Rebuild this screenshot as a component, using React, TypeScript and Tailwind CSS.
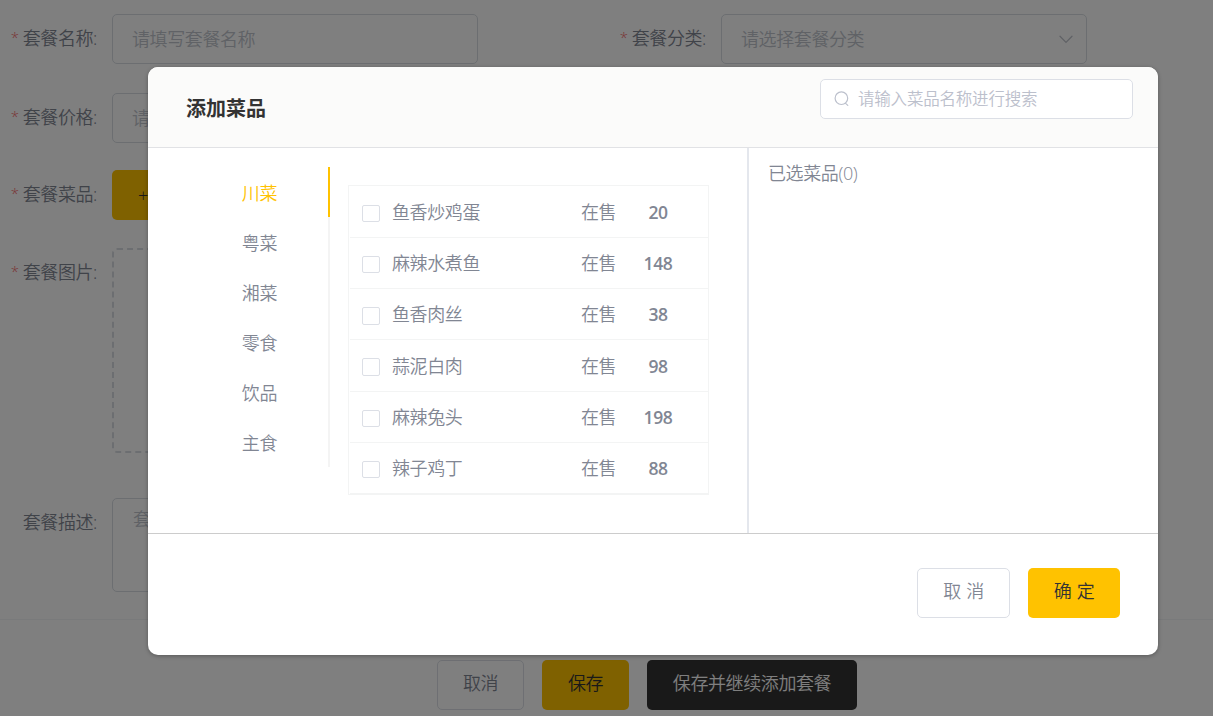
import React, { useState } from 'react';
import clsx from 'clsx';

interface Dish {
  id: number;
  name: string;
  status: string;
  price: number;
}

interface FormLabelProps {
  text: string;
  required?: boolean;
}

const CATEGORIES = ['川菜', '粤菜', '湘菜', '零食', '饮品', '主食'];

const DISHES: Dish[] = [
  { id: 1, name: '鱼香炒鸡蛋', status: '在售', price: 20 },
  { id: 2, name: '麻辣水煮鱼', status: '在售', price: 148 },
  { id: 3, name: '鱼香肉丝', status: '在售', price: 38 },
  { id: 4, name: '蒜泥白肉', status: '在售', price: 98 },
  { id: 5, name: '麻辣兔头', status: '在售', price: 198 },
  { id: 6, name: '辣子鸡丁', status: '在售', price: 88 }
];

const FormLabel: React.FC<FormLabelProps> = ({ text, required = true }) => (
  <label className="flex h-[50px] w-[97px] shrink-0 items-center justify-end whitespace-nowrap pb-[2px]">
    {required && <span className="mr-[4px] pb-[3px] text-[15px] text-[#f56c6c]">*</span>}
    {text}:
  </label>
);

const SearchIcon = () => (
  <svg className="h-4 w-4 shrink-0" viewBox="0 0 16 16" fill="none" stroke="#bcc0cc" strokeWidth="1.2">
    <circle cx="7.4" cy="7.2" r="6.3" />
    <path d="M11.6 12.4l2.2 2" strokeLinecap="round" />
  </svg>
);

const ChevronIcon = () => (
  <svg className="h-[9px] w-[14px] shrink-0" viewBox="0 0 14 9" fill="none" stroke="#c0c4cc" strokeWidth="1.3">
    <path d="M1 1.2l6 6.2 6-6.2" strokeLinecap="round" />
  </svg>
);

// Page behind the dialog
const ComboForm = () => (
  <div className="h-[716px] bg-white pt-[14px]">
    <div className="flex">
      <FormLabel text="套餐名称" />
      <input
        className="ml-[15px] h-[50px] w-[366px] rounded-[5px] border border-[#d8dde3] px-[19px] pb-px placeholder:text-[#c0c4cc]"
        placeholder="请填写套餐名称"
      />
      <div className="ml-[131px] flex">
        <FormLabel text="套餐分类" />
        <div className="ml-[15px] flex h-[50px] w-[366px] items-center justify-between rounded-[5px] border border-[#d8dde3] pl-[19px] pr-[13px] text-[#c0c4cc]">
          <span className="pb-px">请选择套餐分类</span>
          <ChevronIcon />
        </div>
      </div>
    </div>
    <div className="mt-[29px] flex">
      <FormLabel text="套餐价格" />
      <input
        className="ml-[15px] h-[50px] w-[366px] rounded-[5px] border border-[#d8dde3] px-[19px] pb-px placeholder:text-[#c0c4cc]"
        placeholder="请设置套餐价格"
      />
    </div>
    <div className="mt-[27px] flex">
      <FormLabel text="套餐菜品" />
      <button className="ml-[15px] h-[50px] rounded-[5px] bg-[#ffc200] px-[26px] text-[#333]">+ 添加菜品</button>
    </div>
    <div className="mt-[28px] flex">
      <FormLabel text="套餐图片" />
      <div className="ml-[15px] h-[205px] w-[250px] rounded-[5px] border-2 border-dashed border-[#d9dde2]" />
    </div>
    <div className="mt-[45px] flex">
      <FormLabel text="套餐描述" required={false} />
      <textarea
        className="ml-[15px] h-[94px] w-[975px] resize-none rounded-[5px] border border-[#d8dde3] px-[20px] py-[7px] placeholder:text-[#c0c4cc]"
        placeholder="套餐描述，最长200字"
      />
    </div>
    <div className="mt-[27px] flex gap-[18px] border-t border-[#f3f4f7] pl-[437px] pt-[40px]">
      <button className="h-[50px] w-[87px] rounded-[5px] border border-[#dcdfe6] pb-[4px]">取消</button>
      <button className="h-[50px] w-[87px] rounded-[5px] bg-[#ffc200] pb-[4px] text-[#333]">保存</button>
      <button className="h-[50px] w-[210px] rounded-[5px] bg-[#333] pb-[4px] text-white">保存并继续添加套餐</button>
    </div>
  </div>
);

const App: React.FC = () => {
  const [activeCategory, setActiveCategory] = useState('川菜');
  const [selected, setSelected] = useState<number[]>([]);

  const toggleDish = (id: number) => {
    setSelected(prev => (prev.includes(id) ? prev.filter(item => item !== id) : [...prev, id]));
  };

  return (
    <div className="relative h-[716px] w-[1213px] overflow-hidden font-['Open_Sans','Noto_Sans_CJK_SC',sans-serif] text-[18px] font-[350] leading-[26px] tracking-[-0.4px] text-[#818693]">
      <ComboForm />

      <div className="absolute inset-0 flex items-start bg-black/50 pl-[148px] pt-[67px]">
        <div className="flex h-[588px] w-[1010px] flex-col overflow-hidden rounded-[10px] bg-white shadow-[0_1px_4px_rgba(0,0,0,0.3)]">
          <div className="flex h-[81px] shrink-0 items-start justify-between border-b border-[#e1e2e5] bg-[#fbfbfa] pl-[38px] pr-[25px] pt-[12px]">
            <h2 className="pt-[17px] text-[20px] font-bold tracking-normal text-[#333]">添加菜品</h2>
            <div className="flex h-[40px] w-[313px] items-center gap-[8px] rounded-[5px] border border-[#dcdfe6] bg-white pl-[13px]">
              <SearchIcon />
              <input
                className="w-[260px] text-[16.5px] tracking-[-0.2px] outline-none placeholder:text-[#bcc0cc]"
                placeholder="请输入菜品名称进行搜索"
              />
            </div>
          </div>

          <div className="flex h-[385px] shrink-0">
            <div className="flex w-[601px] border-r-2 border-[#e4e7ed] pt-[19px]">
              <ul className="h-[300px] w-[182px] shrink-0">
                {CATEGORIES.map(category => (
                  <li
                    key={category}
                    onClick={() => setActiveCategory(category)}
                    className={clsx(
                      'flex h-[50px] cursor-pointer items-center justify-end border-r-2 pr-[51px] pt-px',
                      category === activeCategory ? 'border-[#ffc200] text-[#ffc200]' : 'border-[#f4f4f4]'
                    )}
                  >
                    {category}
                  </li>
                ))}
              </ul>
              <div className="ml-[18px] mt-[18px] h-[310px] w-[361px] border border-[#f3f4f4] pl-px pt-[0.7px]">
                {DISHES.map(dish => (
                  <div key={dish.id} className="flex h-[51.25px] items-center border-b border-[#f3f4f4] pl-[12px]">
                    <button
                      role="checkbox"
                      aria-checked={selected.includes(dish.id)}
                      aria-label={dish.name}
                      onClick={() => toggleDish(dish.id)}
                      className={clsx(
                        'mt-[3px] h-[17.5px] w-[18px] rounded-[2px] border border-[#dcdfe6]',
                        selected.includes(dish.id) && 'bg-[#ffc200]'
                      )}
                    />
                    <span className="ml-[12px] w-[189px]">{dish.name}</span>
                    <span className="w-[37px]">{dish.status}</span>
                    <span className="w-[80px] text-center text-[17.5px] font-semibold">{dish.price}</span>
                  </div>
                ))}
              </div>
            </div>
            <div className="pl-[19px] pt-[12px]">已选菜品({selected.length})</div>
          </div>

          <div className="flex grow items-start justify-end gap-[18px] border-t border-[#ccc] pr-[38px] pt-[34px]">
            <button className="h-[50px] w-[93px] rounded-[5px] border border-[#dcdfe6] pb-[4px] [word-spacing:1px]">
              取 消
            </button>
            <button className="h-[50px] w-[92px] rounded-[5px] bg-[#ffc200] pb-[4px] text-[#333] [word-spacing:1px]">
              确 定
            </button>
          </div>
        </div>
      </div>
    </div>
  );
};

export default App;
